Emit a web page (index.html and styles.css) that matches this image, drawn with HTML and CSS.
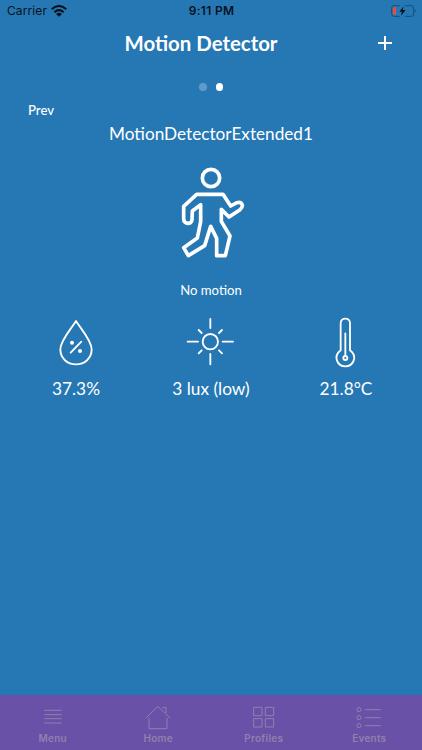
FILE: index.html
```html
<!DOCTYPE html>
<html lang="en">
<head>
<meta charset="utf-8">
<title>Motion Detector</title>
<link rel="stylesheet" href="styles.css">
</head>
<body>
<div class="app">
  <div class="status">
    <div class="carrier"><span>Carrier</span>
      <svg class="wifi" viewBox="0 0 48 36"><path d="M2 13Q24-7 46 13M10 22Q24 9 38 22"/><path class="solid" d="M24 35L15 27Q24 19 33 27Z"/></svg>
    </div>
    <div class="time">9:11 PM</div>
    <svg class="battery" viewBox="0 0 75 36"><path class="shell" d="M25 2H9Q2 2 2 9V27Q2 34 9 34H25M43 2H61Q68 2 68 9V27Q68 34 61 34H43"/><path class="tip" d="M71 13Q78 18 71 23Z"/><path class="level" d="M8 7H15V29H8Q6 29 6 26V10Q6 7 8 7Z"/><path class="bolt" d="M38 4L25 20H33L30 32L44 15H35Z"/></svg>
  </div>
  <header class="header">
    <h1>Motion Detector</h1>
    <svg class="plus" viewBox="0 0 16 16"><path d="M8 1V15M1 8H15"/></svg>
  </header>
  <div class="dots"><i></i><i class="on"></i></div>
  <div class="prev">Prev</div>
  <h2>MotionDetectorExtended1</h2>
  <svg class="walker" viewBox="60 33 198 282"><circle cx="153" cy="69" r="26"/><path d="M110 118H189L212 153L231 143C246 139 253 153 240 164L207 186L184 163V199L210 243L196 302H170V250L152 214L134 272L85 302L71 278L112 249L122 200V149L97 168L96 194C96 209 71 209 71 192V154Z"/></svg>
  <div class="motion">No motion</div>
  <div class="readings">
    <div class="reading">
      <svg viewBox="62 36 153 156"><path d="M137 48C124 70 90 106 90 133C90 160 111 178 137 178C163 178 184 160 184 133C184 106 150 70 137 48ZM121 143L153 110"/><circle class="fill" cx="125" cy="113" r="6"/><circle class="fill" cx="149" cy="138" r="6"/></svg>
      <span>37.3%</span>
    </div>
    <div class="reading">
      <svg viewBox="107 36 153 156"><circle cx="180" cy="110" r="23"/><path d="M180 42V69M180 147V178M112 110H143M217 110H248M145 75L154 84M215 75L206 84M145 145L154 136M215 145L206 136"/></svg>
      <span>3 lux (low)</span>
    </div>
    <div class="reading">
      <svg viewBox="93 36 153 156"><path d="M152 136V55C152 36 180 36 180 55V136C204 154 190 184 166 184C142 184 128 154 152 136ZM166 85V152"/><circle cx="166" cy="159" r="6"/></svg>
      <span>21.8°C</span>
    </div>
  </div>
  <nav class="tabs">
    <div class="tab"><svg viewBox="0 0 84 78"><path d="M16 19H68M16 32H68M16 44H68M16 57H68"/></svg><span>Menu</span></div>
    <div class="tab"><svg viewBox="0 0 84 78"><path d="M5 43L42 7L79 43M15 42V74H69V42M55 11H66V27"/></svg><span>Home</span></div>
    <div class="tab"><svg viewBox="0 0 84 78"><path d="M11 10H36V35H11ZM46 10H71V35H46ZM11 44H36V69H11ZM46 44H71V69H46Z"/></svg><span>Profiles</span></div>
    <div class="tab"><svg viewBox="0 0 84 78"><circle cx="12" cy="17" r="6"/><circle cx="12" cy="41" r="6"/><circle cx="12" cy="65" r="6"/><path d="M29 17H77M29 41H77M29 65H77"/></svg><span>Events</span></div>
  </nav>
</div>
</body>
</html>
```
FILE: styles.css
```css
* { box-sizing: border-box; }
body { margin: 0; }
.app { width: 422px; height: 750px; display: flex; flex-direction: column; background: #2678b5; color: #fff; font-family: Lato, sans-serif; overflow: hidden; }
svg { display: block; flex: none; fill: none; stroke: #fff; stroke-linecap: round; stroke-linejoin: round; }

.status { height: 22px; display: grid; grid-template-columns: 1fr auto 1fr; align-items: center; padding: 0 6px 0 7px; color: #07121c; font: 12px/22px Inter, sans-serif; }
.carrier { display: flex; align-items: center; gap: 4px; letter-spacing: 0.1px; }
.wifi { width: 16px; height: 12px; stroke: #07121c; stroke-width: 6; stroke-linecap: butt; }
.wifi .solid { fill: #07121c; stroke: none; }
.time { font-weight: 600; letter-spacing: 0.3px; }
.battery { width: 25px; height: 12px; justify-self: end; stroke: none; }
.battery .shell { stroke: #174e7a; stroke-width: 3; }
.battery .tip { fill: #174e7a; }
.battery .level { fill: #ee493f; }
.battery .bolt { fill: #07121c; }

.header { height: 44px; display: grid; grid-template-columns: 1fr auto 1fr; align-items: center; padding: 0 29px 2px; }
h1 { grid-column: 2; margin: 0 20px 0 0; font-size: 20.4px; line-height: 42px; font-weight: 700; white-space: nowrap; }
.plus { width: 16px; height: 16px; justify-self: end; stroke-width: 2; stroke-linecap: butt; }

.dots { height: 42px; display: flex; justify-content: center; align-items: center; gap: 9px; }
.dots i { width: 7.5px; height: 7.5px; border-radius: 50%; background: #5f9bc9; }
.dots .on { background: #fff; }
.prev { height: 14px; margin: -5px 0 0 28px; font-size: 13.2px; line-height: 14px; font-weight: 500; }
h2 { margin: 5px 0 0; text-align: center; font-size: 17.2px; line-height: 24px; font-weight: 400; }
.walker { width: 66px; height: 94px; margin: 20px 0 0 180px; stroke-width: 11; }
.motion { margin-top: 20px; text-align: center; font-size: 13.1px; line-height: 20px; }
.readings { display: grid; grid-template-columns: repeat(3, 135px); justify-content: center; margin-top: 17px; }
.reading { display: flex; flex-direction: column; align-items: center; font-size: 17.3px; line-height: 24px; }
.reading svg { width: 51px; height: 52px; margin-bottom: 8px; stroke-width: 5.5; }
.reading .fill { fill: #fff; stroke: none; }

.tabs { height: 55px; margin-top: auto; display: grid; grid-template-columns: repeat(4, 1fr); background: #6951a8; color: #8f81ac; font: 600 10px/14px Inter, sans-serif; letter-spacing: 0.25px; }
.tab { display: flex; flex-direction: column; align-items: center; padding-top: 9px; }
.tab svg { width: 28px; height: 26px; margin-bottom: 1px; stroke: #8f81ac; stroke-width: 3; stroke-linecap: butt; stroke-linejoin: miter; }
```
